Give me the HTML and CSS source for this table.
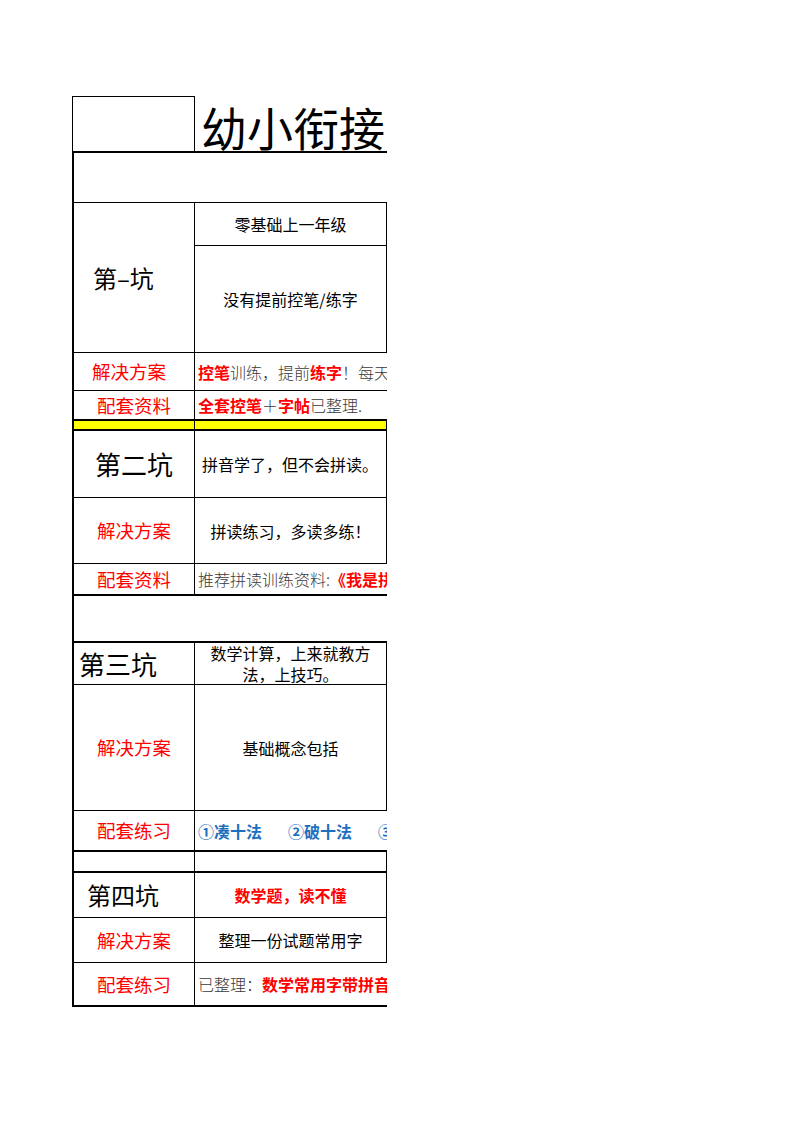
FILE: index.html
```html
<!DOCTYPE html>
<html lang="zh-CN">
<head>
<meta charset="utf-8">
<title>幼小衔接</title>
<link rel="stylesheet" href="styles.css">
</head>
<body>
<div class="sheet">
  <div class="row title thick">
    <div class="title-box"></div>
    <div class="title-text">幼小衔接</div>
  </div>

  <div class="row h50"><div class="full"></div></div>

  <div class="row h150">
    <div class="lc keng k1">第–坑</div>
    <div class="rc stack">
      <div class="sub top">零基础上一年级</div>
      <div class="sub">没有提前控笔/练字</div>
    </div>
  </div>

  <div class="row h38">
    <div class="lc label shift">解决方案</div>
    <div class="rc open"><b class="hl">控笔</b><span class="song">训练，提前</span><b class="hl">练字</b><span class="song">！每天</span></div>
  </div>

  <div class="row h30 thick">
    <div class="lc label">配套资料</div>
    <div class="rc open"><b class="hl">全套控笔</b><span class="song">＋</span><b class="hl">字帖</b><span class="song">已整理.</span></div>
  </div>

  <div class="row h10 thick yellow">
    <div class="lc"></div>
    <div class="rc"></div>
  </div>

  <div class="row h67">
    <div class="lc keng k2">第二坑</div>
    <div class="rc left8">拼音学了，但不会拼读。</div>
  </div>

  <div class="row h66">
    <div class="lc label">解决方案</div>
    <div class="rc">拼读练习，多读多练！</div>
  </div>

  <div class="row h32 thick">
    <div class="lc label">配套资料</div>
    <div class="rc open"><span class="song">推荐拼读训练资料:</span><b class="hl">《我是拼</b></div>
  </div>

  <div class="row h47 thick"><div class="full"></div></div>

  <div class="row h42">
    <div class="lc keng k3">第三坑</div>
    <div class="rc wrap">数学计算，上来就教方法，上技巧。</div>
  </div>

  <div class="row h126">
    <div class="lc label">解决方案</div>
    <div class="rc">基础概念包括</div>
  </div>

  <div class="row h41 thick">
    <div class="lc label">配套练习</div>
    <div class="rc open blue"><b class="seg">①凑十法</b><b class="seg">②破十法</b><b class="seg">③</b></div>
  </div>

  <div class="row h21 thick">
    <div class="lc"></div>
    <div class="rc"></div>
  </div>

  <div class="row h45">
    <div class="lc keng k4">第四坑</div>
    <div class="rc"><b class="hl">数学题，读不懂</b></div>
  </div>

  <div class="row h45">
    <div class="lc label">解决方案</div>
    <div class="rc">整理一份试题常用字</div>
  </div>

  <div class="row h44 thick">
    <div class="lc label">配套练习</div>
    <div class="rc open"><span class="song">已整理：</span><b class="hl">数学常用字带拼音</b></div>
  </div>
</div>
</body>
</html>
```
FILE: styles.css
```css
* { box-sizing: border-box; }

body {
  margin: 0;
  background: #fff;
  color: #000;
  font-family: "Noto Sans CJK SC", "Noto Sans", sans-serif;
}

.sheet {
  margin: 96px 0 0 72px;
  width: 315px;
  overflow: hidden;
}

.row {
  display: flex;
  border-left: 2px solid #000;
  border-bottom: 1px solid #000;
}
.row.thick { border-bottom-width: 2px; }

.h10 { height: 10px; }
.h21 { height: 21px; }
.h30 { height: 30px; }
.h32 { height: 32px; }
.h38 { height: 38px; }
.h41 { height: 41px; }
.h42 { height: 42px; }
.h44 { height: 44px; }
.h45 { height: 45px; }
.h47 { height: 47px; }
.h50 { height: 50px; }
.h66 { height: 66px; }
.h67 { height: 67px; }
.h126 { height: 126px; }
.h150 { height: 150px; }

/* title row */
.row.title {
  height: 57px;
  border-left: none;
}
.title-box {
  width: 123px;
  flex: none;
  border: 1px solid #000;
  border-bottom: none;
}
.title-text {
  flex: none;
  width: 192px;
  display: flex;
  align-items: flex-end;
  padding: 0 0 2px 6px;
  font-size: 46px;
  line-height: 46px;
  white-space: nowrap;
}

.full { width: 313px; }

.lc {
  width: 121px;
  flex: none;
  border-right: 1px solid #000;
  display: flex;
  align-items: center;
  justify-content: center;
  white-space: nowrap;
}

.rc {
  width: 192px;
  flex: none;
  border-right: 1px solid #000;
  display: flex;
  align-items: center;
  justify-content: center;
  font-size: 16px;
  line-height: 20px;
  white-space: nowrap;
}
.rc.open {
  border-right: none;
  justify-content: flex-start;
  padding-left: 3px;
}
.rc.left8 {
  justify-content: flex-start;
  padding-left: 7px;
}
.rc.wrap {
  white-space: normal;
  text-align: center;
  padding: 0 14px;
  line-height: 21px;
}
.rc.stack {
  flex-direction: column;
  align-items: stretch;
}
.sub {
  flex: 1;
  display: flex;
  align-items: center;
  justify-content: center;
}
.sub.top {
  flex: none;
  height: 43px;
  border-bottom: 1px solid #000;
}

.keng { line-height: 1; }
.k1 { font-size: 24px; justify-content: flex-start; padding-left: 19px; }
.k2 { font-size: 26px; }
.k3 { font-size: 26px; justify-content: flex-start; padding-left: 5px; }
.k4 { font-size: 24px; justify-content: flex-start; padding-left: 13px; }

.label {
  color: #ff0000;
  font-size: 18.5px;
  line-height: 1;
}
.label.shift { padding-right: 10px; }

.hl { color: #ff0000; font-weight: 700; }
.song { color: #3a3a3a; font-weight: 300; }

.blue { color: #1f6fbf; }
.seg { font-weight: 700; margin-right: 26px; }

.yellow .lc, .yellow .rc { background: #ffff00; }
```
